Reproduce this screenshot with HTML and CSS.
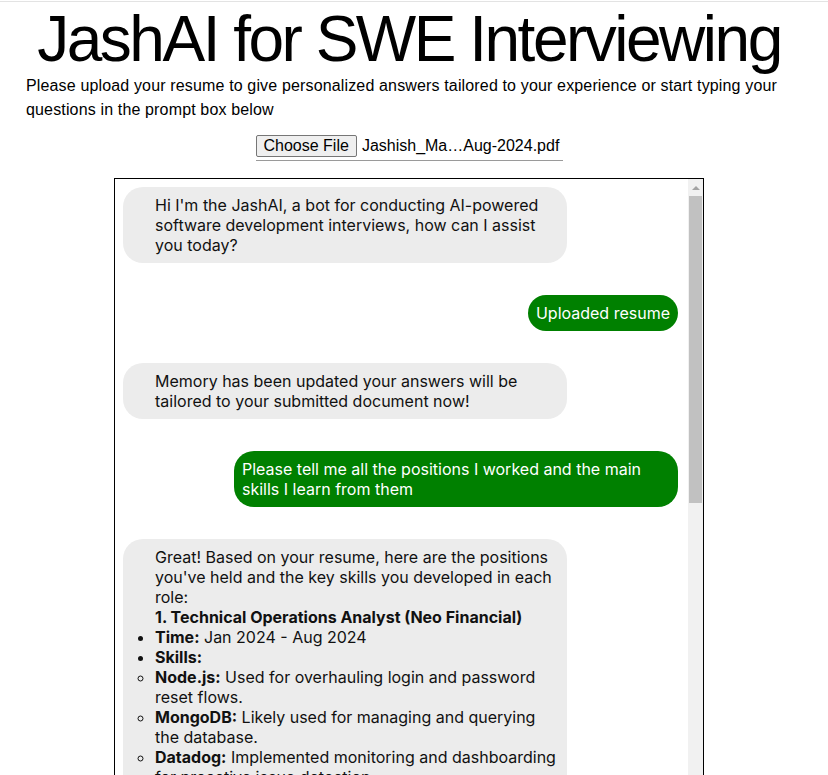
FILE: index.html
```html
<!DOCTYPE html>
<html lang="en">
<head>
<meta charset="utf-8">
<title>JashAI for SWE Interviewing</title>
<link rel="stylesheet" href="styles.css">
</head>
<body>
<div class="topline"></div>
<div class="page">
  <h1 class="title">JashAI for SWE Interviewing</h1>
  <p class="intro">Please upload your resume to give personalized answers tailored to your experience or start typing your questions in the prompt box below</p>
  <div class="upload-row">
    <label class="upload">
      <span class="file-btn">Choose File</span>
      <span class="file-name">Jashish_Ma…Aug-2024.pdf</span>
    </label>
  </div>
  <div class="chat">
    <div class="messages">
      <div class="bubble bot">Hi I'm the JashAI, a bot for conducting AI-powered software development interviews, how can I assist you today?</div>
      <div class="bubble user">Uploaded resume</div>
      <div class="bubble bot">Memory has been updated your answers will be tailored to your submitted document now!</div>
      <div class="bubble user">Please tell me all the positions I worked and the main skills I learn from them</div>
      <div class="bubble bot">
        <p>Great! Based on your resume, here are the positions you've held and the key skills you developed in each role:</p>
        <p><strong>1. Technical Operations Analyst (Neo Financial)</strong></p>
        <ul class="list">
          <li><strong>Time:</strong> Jan 2024 - Aug 2024</li>
          <li><strong>Skills:</strong>
            <ul class="sublist">
              <li><strong>Node.js:</strong> Used for overhauling login and password reset flows.</li>
              <li><strong>MongoDB:</strong> Likely used for managing and querying the database.</li>
              <li><strong>Datadog:</strong> Implemented monitoring and dashboarding for proactive issue detection.</li>
              <li><strong>AWS:</strong> Used for deploying and maintaining services.</li>
            </ul>
          </li>
        </ul>
      </div>
    </div>
    <div class="scrollbar">
      <div class="scroll-arrow"><span class="tri"></span></div>
      <div class="scroll-track"><div class="scroll-thumb"></div></div>
    </div>
  </div>
</div>
</body>
</html>
```

FILE: styles.css
```css
html, body {
  margin: 0;
  padding: 0;
  background: #ffffff;
}

body {
  font-family: "Liberation Sans", Arial, sans-serif;
  color: #000;
  overflow: hidden;
}

.topline {
  height: 1px;
  margin-top: 1px;
  background: #e3e3e3;
}

.page {
  width: 818px;
  text-align: center;
}

.title {
  margin: 5px 0 0;
  font-size: 64px;
  line-height: 64px;
  font-weight: normal;
  letter-spacing: -2.5px;
}

.intro {
  margin: 3px 0 0;
  padding: 0 26px;
  text-align: left;
  font-size: 16px;
  line-height: 24px;
  letter-spacing: 0.15px;
}

.upload-row {
  margin-top: 13px;
  display: flex;
  justify-content: center;
}

.upload {
  display: inline-flex;
  align-items: center;
  gap: 5px;
  width: 307px;
  padding-bottom: 3px;
  border-bottom: 1px solid #9a9a9a;
  font-size: 16px;
}

.file-btn {
  display: inline-block;
  box-sizing: border-box;
  height: 22px;
  padding: 1px 7px;
  line-height: 18px;
  background: #efefef;
  border: 1px solid #767676;
  border-radius: 2px;
  color: #000;
}

.file-name {
  color: #000;
  line-height: 18px;
}

.chat {
  box-sizing: border-box;
  width: 590px;
  height: 640px;
  margin: 17px auto 0;
  border: 1px solid #000;
  display: flex;
  text-align: left;
}

.messages {
  flex: 1;
  overflow: hidden;
  padding: 8px 10px 8px 8px;
  display: flex;
  flex-direction: column;
  gap: 32px;
  font-family: "Inter", "Noto Sans", sans-serif;
  font-size: 16px;
  line-height: 20px;
}

.bubble {
  box-sizing: border-box;
  max-width: 444px;
  border-radius: 20px;
}

.bot {
  align-self: flex-start;
  background: #ececec;
  color: #111;
  padding: 8px 8px 8px 32px;
}

.user {
  align-self: flex-end;
  background: #008000;
  color: #fff;
  padding: 8px 8px;
}

.bot p {
  margin: 0;
}

.list,
.sublist {
  margin: 0;
  padding: 0;
}

.list {
  list-style: disc outside;
}

.sublist {
  list-style: circle outside;
}

.scrollbar {
  width: 15px;
  flex: none;
  background: #f1f1f1;
  display: flex;
  flex-direction: column;
}

.scroll-arrow {
  height: 17px;
  display: flex;
  align-items: center;
  justify-content: center;
}

.tri {
  width: 0;
  height: 0;
  border-left: 4px solid transparent;
  border-right: 4px solid transparent;
  border-bottom: 4px solid #a3a3a3;
}

.scroll-track {
  flex: 1;
}

.scroll-thumb {
  height: 307px;
  margin: 0 1px 0 1px;
  background: #c1c1c1;
}
```
